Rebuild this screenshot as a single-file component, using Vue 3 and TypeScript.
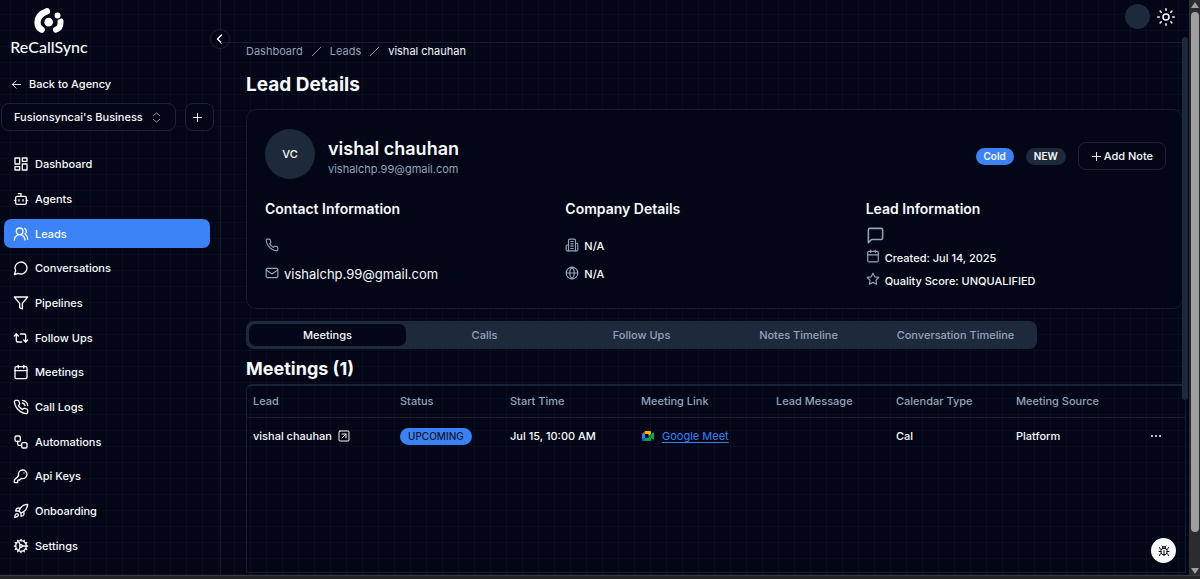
<script setup lang="ts">
import { ref } from 'vue'

interface NavItem { label: string; paths: string[] }

const icons: Record<string, string[]> = {
  calendar: ['M8 2v4', 'M16 2v4', 'M5 4h14a2 2 0 0 1 2 2v14a2 2 0 0 1-2 2H5a2 2 0 0 1-2-2V6a2 2 0 0 1 2-2z', 'M3 10h18'],
  phone: ['M22 16.92v3a2 2 0 0 1-2.18 2 19.79 19.79 0 0 1-8.63-3.07 19.5 19.5 0 0 1-6-6 19.79 19.79 0 0 1-3.07-8.67A2 2 0 0 1 4.11 2h3a2 2 0 0 1 2 1.72 12.84 12.84 0 0 0 .7 2.81 2 2 0 0 1-.45 2.11L8.09 9.91a16 16 0 0 0 6 6l1.27-1.27a2 2 0 0 1 2.11-.45 12.84 12.84 0 0 0 2.81.7A2 2 0 0 1 22 16.92z'],
  mail: ['M4 4h16a2 2 0 0 1 2 2v12a2 2 0 0 1-2 2H4a2 2 0 0 1-2-2V6a2 2 0 0 1 2-2z', 'm22 7-8.97 5.7a1.94 1.94 0 0 1-2.06 0L2 7'],
  building: ['M6 22V4a2 2 0 0 1 2-2h8a2 2 0 0 1 2 2v18Z', 'M6 12H4a2 2 0 0 0-2 2v6a2 2 0 0 0 2 2h2', 'M18 9h2a2 2 0 0 1 2 2v9a2 2 0 0 1-2 2h-2', 'M10 6h4', 'M10 10h4', 'M10 14h4', 'M10 18h4'],
  globe: ['M2 12a10 10 0 1 0 20 0a10 10 0 1 0-20 0', 'M12 2a14.5 14.5 0 0 0 0 20 14.5 14.5 0 0 0 0-20', 'M2 12h20'],
  message: ['M21 15a2 2 0 0 1-2 2H7l-4 4V5a2 2 0 0 1 2-2h14a2 2 0 0 1 2 2z'],
  star: ['M12 2l3.09 6.26L22 9.27l-5 4.87 1.18 6.88L12 17.77l-6.18 3.25L7 14.14 2 9.27l6.91-1.01z'],
}

const navItems: NavItem[] = [
  { label: 'Dashboard', paths: ['M3 3h7v9H3z', 'M14 3h7v5h-7z', 'M14 12h7v9h-7z', 'M3 16h7v5H3z'] },
  { label: 'Agents', paths: ['M12 8V4H8', 'M6 8h12a2 2 0 0 1 2 2v8a2 2 0 0 1-2 2H6a2 2 0 0 1-2-2v-8a2 2 0 0 1 2-2z', 'M2 14h2', 'M20 14h2', 'M15 13v2', 'M9 13v2'] },
  { label: 'Leads', paths: ['M18 21a8 8 0 0 0-16 0', 'M5 8a5 5 0 1 0 10 0a5 5 0 1 0-10 0', 'M22 20c0-3.37-2-6.5-4-8a5 5 0 0 0-.45-8.3'] },
  { label: 'Conversations', paths: ['M7.9 20A9 9 0 1 0 4 16.1L2 22Z'] },
  { label: 'Pipelines', paths: ['M22 3H2l8 9.46V19l4 2v-8.54z'] },
  { label: 'Follow Ups', paths: ['m2 9 3-3 3 3', 'M13 18H7a2 2 0 0 1-2-2V6', 'm22 15-3 3-3-3', 'M11 6h6a2 2 0 0 1 2 2v10'] },
  { label: 'Meetings', paths: icons.calendar },
  { label: 'Call Logs', paths: [...icons.phone, 'M14.05 2a9 9 0 0 1 8 7.94', 'M14.05 6A5 5 0 0 1 18 10'] },
  { label: 'Automations', paths: ['M5 3h4a2 2 0 0 1 2 2v4a2 2 0 0 1-2 2H5a2 2 0 0 1-2-2V5a2 2 0 0 1 2-2z', 'M7 11v4a2 2 0 0 0 2 2h4', 'M15 13h4a2 2 0 0 1 2 2v4a2 2 0 0 1-2 2h-4a2 2 0 0 1-2-2v-4a2 2 0 0 1 2-2z'] },
  { label: 'Api Keys', paths: ['M2 18v3c0 .6.4 1 1 1h4v-3l1-1h2l2.4-2.4a6.5 6.5 0 1 0-4-4Z', 'M16.5 7.5h.01'] },
  { label: 'Onboarding', paths: ['M4.5 16.5c-1.5 1.26-2 5-2 5s3.74-.5 5-2c.71-.84.7-2.13-.09-2.91a2.18 2.18 0 0 0-2.91-.09z', 'm12 15-3-3a22 22 0 0 1 2-3.95A12.88 12.88 0 0 1 22 2c0 2.72-.78 7.5-6 11a22.35 22.35 0 0 1-4 2z', 'M9 12H4s.55-3.03 2-4c1.62-1.08 5 0 5 0', 'M12 15v5s3.03-.55 4-2c1.08-1.62 0-5 0-5'] },
  { label: 'Settings', paths: ['M4 12a8 8 0 1 0 16 0a8 8 0 1 0-16 0', 'M10 12a2 2 0 1 0 4 0a2 2 0 1 0-4 0', 'M12 2v2', 'M12 22v-2', 'm17 20.66-1-1.73', 'M11 10.27 7 3.34', 'm20.66 17-1.73-1', 'm3.34 7 1.73 1', 'M14 12h8', 'M2 12h2', 'm20.66 7-1.73 1', 'm3.34 17 1.73-1', 'm17 3.34-1 1.73', 'm11 13.73-4 6.93'] },
]

const activeNav = ref('Leads')
const business = ref("Fusionsyncai's Business")
const tabs = ['Meetings', 'Calls', 'Follow Ups', 'Notes Timeline', 'Conversation Timeline']
const activeTab = ref('Meetings')

const sections = [
  { title: 'Contact Information', rows: [{ icon: 'phone', text: '', large: false }, { icon: 'mail', text: 'vishalchp.99@gmail.com', large: true }] },
  { title: 'Company Details', rows: [{ icon: 'building', text: 'N/A', large: false }, { icon: 'globe', text: 'N/A', large: false }] },
]
const leadRows = [
  { icon: 'calendar', text: 'Created: Jul 14, 2025' },
  { icon: 'star', text: 'Quality Score: UNQUALIFIED' },
]
const columns = ['Lead', 'Status', 'Start Time', 'Meeting Link', 'Lead Message', 'Calendar Type', 'Meeting Source']
</script>

<template>
  <div class="frame">
    <div class="app">
      <aside class="sidebar">
        <div class="brand">
          <svg class="brand-mark" viewBox="0 0 90 76" aria-hidden="true">
            <path d="M39 10C20 17 10 29 10 44c0 10 5 18 13 22" fill="none" stroke="#fff" stroke-width="19" stroke-linecap="round" />
            <path d="M80 40v5c0 11-6 19-14 21" fill="none" stroke="#fff" stroke-width="18" stroke-linecap="round" />
            <circle cx="44" cy="43" r="17" fill="#020617" />
            <circle cx="44" cy="43" r="13" fill="#fff" />
            <circle cx="71" cy="23" r="13" fill="#020617" />
            <circle cx="71" cy="23" r="9" fill="#fff" />
          </svg>
          <span class="brand-name">ReCallSync</span>
        </div>
        <button class="collapse" type="button" aria-label="Collapse sidebar">
          <svg class="icon bold" viewBox="0 0 24 24"><path d="m15 4-8 8 8 8" /></svg>
        </button>
        <a class="back" href="#agency">
          <svg class="icon" viewBox="0 0 24 24"><path d="m11 20-8-8 8-8" /><path d="M21 12H3" /></svg>
          Back to Agency
        </a>
        <div class="switcher">
          <div class="select-wrap">
            <select v-model="business" aria-label="Business">
              <option>Fusionsyncai's Business</option>
            </select>
            <svg class="icon select-icon" viewBox="0 0 24 24"><path d="m5 16 7 6 7-6" /><path d="m5 8 7-6 7 6" /></svg>
          </div>
          <button class="add" type="button" aria-label="Add business">
            <svg class="icon" viewBox="0 0 24 24"><path d="M3 12h18" /><path d="M12 3v18" /></svg>
          </button>
        </div>
        <nav class="nav" aria-label="Main">
          <div v-for="item in navItems" :key="item.label" class="nav-row">
            <a class="nav-link" :class="{ active: item.label === activeNav }" href="#" @click.prevent="activeNav = item.label">
              <svg class="icon" viewBox="0 0 24 24" aria-hidden="true"><path v-for="d in item.paths" :key="d" :d="d" /></svg>
              {{ item.label }}
            </a>
          </div>
        </nav>
      </aside>

      <div class="page">
        <header class="topbar">
          <span class="user"></span>
          <button class="theme" type="button" aria-label="Toggle theme">
            <svg class="icon" viewBox="0 0 24 24"><path d="M8 12a4 4 0 1 0 8 0a4 4 0 1 0-8 0M12 1v2M12 21v2M4.2 4.2l1.4 1.4M18.4 18.4l1.4 1.4M1 12h2M21 12h2M4.2 19.8l1.4-1.4M18.4 5.6l1.4-1.4" /></svg>
          </button>
        </header>
        <main class="content">
          <nav class="crumbs" aria-label="Breadcrumb">
            <a href="#dashboard">Dashboard</a>
            <svg class="slash" viewBox="0 0 12 12" aria-hidden="true"><path d="M1 11 11 1" /></svg>
            <a href="#leads">Leads</a>
            <svg class="slash" viewBox="0 0 12 12" aria-hidden="true"><path d="M1 11 11 1" /></svg>
            <span class="current">vishal chauhan</span>
          </nav>
          <h1>Lead Details</h1>

          <section class="card">
            <div class="profile">
              <div class="avatar">VC</div>
              <div class="identity">
                <h2>vishal chauhan</h2>
                <p>vishalchp.99@gmail.com</p>
              </div>
              <div class="actions">
                <span class="badge blue">Cold</span>
                <span class="badge">NEW</span>
                <button class="note" type="button">
                  <svg class="icon" viewBox="0 0 24 24"><path d="M3 12h18" /><path d="M12 3v18" /></svg>Add Note
                </button>
              </div>
            </div>
            <div class="facts">
              <section v-for="s in sections" :key="s.title">
                <h3>{{ s.title }}</h3>
                <ul class="fact-list">
                  <li v-for="r in s.rows" :key="r.icon" :class="{ large: r.large }">
                    <svg class="icon" viewBox="0 0 24 24" aria-hidden="true"><path v-for="d in icons[r.icon]" :key="d" :d="d" /></svg>
                    <span>{{ r.text }}</span>
                  </li>
                </ul>
              </section>
              <section>
                <h3>Lead Information</h3>
                <ul class="fact-list dense">
                  <li class="message">
                    <svg class="icon" viewBox="0 0 24 24" aria-hidden="true"><path v-for="d in icons.message" :key="d" :d="d" /></svg>
                  </li>
                  <li v-for="r in leadRows" :key="r.icon">
                    <svg class="icon" viewBox="0 0 24 24" aria-hidden="true"><path v-for="d in icons[r.icon]" :key="d" :d="d" /></svg>
                    <span>{{ r.text }}</span>
                  </li>
                </ul>
              </section>
            </div>
          </section>

          <div class="tabs" role="tablist">
            <button v-for="t in tabs" :key="t" type="button" role="tab" :aria-selected="t === activeTab" :class="{ active: t === activeTab }" @click="activeTab = t">{{ t }}</button>
          </div>
          <h2 class="table-title">Meetings (1)</h2>

          <div class="table-box">
            <table>
              <colgroup>
                <col class="w-lead" /><col class="w-status" /><col class="w-start" /><col class="w-link" /><col class="w-msg" /><col class="w-type" /><col class="w-source" /><col />
              </colgroup>
              <thead>
                <tr>
                  <th v-for="c in columns" :key="c" scope="col">{{ c }}</th>
                  <th aria-label="Actions"></th>
                </tr>
              </thead>
              <tbody>
                <tr>
                  <td>
                    <a class="lead-link" href="#lead">vishal chauhan
                      <svg class="icon" viewBox="0 0 24 24" aria-hidden="true"><path d="M4 2h16a2 2 0 0 1 2 2v16a2 2 0 0 1-2 2H4a2 2 0 0 1-2-2V4a2 2 0 0 1 2-2z" /><path d="M8 8h8v8" /><path d="m8 16 8-8" /></svg>
                    </a>
                  </td>
                  <td><span class="badge blue dark">UPCOMING</span></td>
                  <td>Jul 15, 10:00 AM</td>
                  <td>
                    <a class="meet" href="#meet">
                      <svg viewBox="0 0 24 20" aria-hidden="true">
                        <path d="M0 6h6v8H0z" fill="#2684fc" />
                        <path d="M6 0v6H0z" fill="#ea4335" />
                        <path d="M6 0h10q2 0 2 2v5l-5 3V6H6z" fill="#ffba00" />
                        <path d="M0 14h6v6H2q-2 0-2-2z" fill="#0066da" />
                        <path d="M6 14h7v-4l5 3v5q0 2-2 2H6z" fill="#00ac47" />
                        <path d="m15 10 7-7q2-1 2 1v12q0 2-2 1z" fill="#00ac47" />
                        <path d="m13 10 5-4v8z" fill="#00832d" />
                      </svg>
                      <span>Google Meet</span>
                    </a>
                  </td>
                  <td></td>
                  <td>Cal</td>
                  <td>Platform</td>
                  <td>
                    <button class="more" type="button" aria-label="Row actions">
                      <svg viewBox="0 0 12 12"><circle cx="2" cy="6" r="1" /><circle cx="6" cy="6" r="1" /><circle cx="10" cy="6" r="1" /></svg>
                    </button>
                  </td>
                </tr>
              </tbody>
            </table>
          </div>
        </main>
        <div class="inner-thumb" aria-hidden="true"></div>
        <button class="bug" type="button" aria-label="Report a bug">
          <svg class="icon" viewBox="0 0 24 24"><path d="m8 2 1.88 1.88M14.12 3.88 16 2M9 7.13v-1a3 3 0 1 1 6 0v1M12 20c-3.3 0-6-2.7-6-6v-3a4 4 0 0 1 4-4h4a4 4 0 0 1 4 4v3c0 3.3-2.7 6-6 6M12 20v-9M6.53 9C4.6 8.8 3 7.1 3 5M6 13H2M3 21c0-2.1 1.7-3.9 3.8-4M20.97 5c0 2.1-1.6 3.8-3.5 4M22 13h-4M17.2 17c2.1.1 3.8 1.9 3.8 4" /></svg>
        </button>
      </div>
    </div>

    <div class="scrollbar" aria-hidden="true">
      <svg viewBox="0 0 10 6"><path d="M5 0 9 6H1z" /></svg>
      <div class="thumb"></div>
      <svg viewBox="0 0 10 6"><path d="M5 6 9 0H1z" /></svg>
    </div>
    <div class="bottom-edge" aria-hidden="true"></div>
  </div>
</template>

<style>
body { background: #020617; }
</style>

<style scoped>
* { box-sizing: border-box; }
.frame {
  display: grid;
  grid-template-columns: minmax(0, 1fr) 11px;
  grid-template-rows: 1fr 4px;
  min-height: 100vh;
  font: 500 11px/16px Inter, "Liberation Sans", sans-serif;
  color: #f8fafc;
}
.app {
  display: grid;
  grid-template-columns: 221px minmax(0, 1fr);
  background-color: #020617;
  background-image:
    linear-gradient(to right, rgba(128, 140, 170, 0.05) 1px, transparent 1px),
    linear-gradient(to bottom, rgba(128, 140, 170, 0.05) 1px, transparent 1px);
  background-size: 16px 16px;
  background-position: 10px 14px;
}
button, select { font: inherit; color: inherit; margin: 0; cursor: pointer; }
a { color: inherit; text-decoration: none; }
h1, h2, h3, p, ul { margin: 0; padding: 0; }
.icon {
  width: 12px;
  height: 12px;
  flex: none;
  fill: none;
  stroke: currentColor;
  stroke-width: 2;
  stroke-linecap: round;
  stroke-linejoin: round;
}
.icon.bold { stroke-width: 3; }

.sidebar {
  position: relative;
  display: flex;
  flex-direction: column;
  border-right: 1px solid #141c2e;
  padding-bottom: 12px;
}
.brand {
  display: flex;
  flex-direction: column;
  align-items: center;
  width: 98px;
  padding-top: 8px;
}
.brand-mark { width: 30px; height: 25px; }
.brand-name { font: 500 16px/20px Lato, sans-serif; margin-top: 4px; }
.collapse {
  position: absolute;
  top: 29px;
  right: -10px;
  width: 20px;
  height: 20px;
  padding: 0;
  display: grid;
  place-items: center;
  border: 1px solid #1a2336;
  border-radius: 50%;
  background: #020617;
}
.back { display: flex; align-items: center; gap: 7px; margin-top: 19px; padding-left: 11px; }
.back .icon { width: 11px; height: 11px; }
.switcher { display: flex; gap: 9px; padding: 11px 6px 0 1px; }
.select-wrap { position: relative; flex: 1; }
.select-wrap select {
  width: 100%;
  height: 28px;
  padding: 0 28px 0 12px;
  appearance: none;
  border: 1px solid #1a2336;
  border-radius: 8px;
  background: #020617;
}
.select-icon { position: absolute; right: 14px; top: 9px; width: 11px; height: 11px; color: #94a3b8; pointer-events: none; }
.add {
  width: 29px;
  height: 28px;
  padding: 0 5px 0 0;
  display: grid;
  place-items: center;
  border: 1px solid #1a2336;
  border-radius: 8px;
  background: #020617;
}
.add .icon { width: 11px; height: 11px; }
.nav { flex: 1; display: flex; flex-direction: column; margin-top: 16px; padding: 0 10px 0 4px; }
.nav-row { flex: 1; display: flex; align-items: center; }
.nav-link {
  flex: 1;
  display: flex;
  align-items: center;
  gap: 6px;
  height: 29px;
  padding: 0 9px;
  border-radius: 7px;
}
.nav-link.active { background: #3b82f6; }
.nav-link .icon { width: 16px; height: 16px; }

.page { position: relative; display: flex; flex-direction: column; min-width: 0; }
.topbar {
  display: flex;
  justify-content: flex-end;
  align-items: flex-start;
  gap: 7px;
  height: 43px;
  margin-right: 6px;
  padding: 4px 8px 0 0;
  border-bottom: 1px solid #141c2e;
}
.user { width: 25px; height: 25px; border-radius: 50%; background: #1e293b; }
.theme { display: grid; place-items: center; width: 18px; height: 26px; padding: 0; border: 0; background: none; }
.theme .icon { width: 18px; height: 18px; }
.content { flex: 1; display: flex; flex-direction: column; padding: 0 3px 2px 25px; }
.crumbs { display: flex; align-items: center; gap: 8px; color: #94a3b8; font-weight: 400; }
.crumbs .current { color: #f8fafc; }
.slash { width: 11px; height: 11px; stroke: #94a3b8; fill: none; }
h1 { font-size: 19px; line-height: 24px; font-weight: 700; margin-top: 14px; }
.card {
  margin: 12px 3px 0 0;
  padding: 19px 16px 16px 18px;
  border: 1px solid #141c2e;
  border-radius: 10px;
  background: #020617;
}
.profile { display: flex; align-items: center; }
.avatar {
  display: grid;
  place-items: center;
  width: 50px;
  height: 50px;
  border-radius: 50%;
  background: #1e293b;
}
.identity { flex: 1; margin-left: 13px; padding-top: 8px; }
.identity h2 { font-size: 18px; line-height: 22px; font-weight: 600; }
.identity p { color: #94a3b8; font-weight: 400; line-height: 18px; }
.actions { display: flex; align-items: center; gap: 12px; padding-top: 4px; }
.badge {
  display: inline-block;
  padding: 0 8px;
  border-radius: 9px;
  background: #1e293b;
  font-size: 10px;
  line-height: 17px;
  font-weight: 600;
}
.badge.blue { background: #3b82f6; }
.badge.dark { color: #0f172a; font-weight: 500; }
.note {
  display: flex;
  align-items: center;
  gap: 2px;
  height: 28px;
  padding: 0 12px;
  border: 1px solid #1a2336;
  border-radius: 8px;
  background: #020617;
}
.note .icon { width: 11px; height: 11px; }
.facts { display: grid; grid-template-columns: repeat(3, 1fr); margin-top: 20px; }
h3 { font-size: 14px; line-height: 20px; font-weight: 600; }
.fact-list { list-style: none; margin-top: 13px; }
.fact-list li { display: flex; align-items: center; gap: 5px; height: 28px; }
.fact-list .icon { width: 14px; height: 14px; color: #94a3b8; margin-bottom: 3px; }
.fact-list .large { font-size: 13px; font-weight: 400; }
.fact-list.dense { margin-top: 6px; }
.fact-list.dense li { height: 23px; }
.fact-list.dense .message { height: 21px; }
.fact-list .message .icon { width: 19px; height: 19px; margin-bottom: 0; }

.tabs {
  display: grid;
  grid-template-columns: repeat(5, 1fr);
  width: 791px;
  max-width: 100%;
  margin-top: 12px;
  padding: 3px;
  border-radius: 8px;
  background: #1e293b;
}
.tabs button { height: 22px; padding: 0; border: 0; border-radius: 7px; background: none; color: #94a3b8; }
.tabs .active { background: #020617; color: #f8fafc; }
.table-title { font-size: 18px; line-height: 24px; font-weight: 700; margin-top: 8px; }
.table-box { flex: 1; margin-top: 3px; border: 1px solid #141c2e; border-top: 2px solid #1a2336; border-radius: 6px 0 0 0; }
table { width: 100%; table-layout: fixed; border-collapse: collapse; }
.w-lead { width: 147px; }
.w-status { width: 110px; }
.w-start { width: 131px; }
.w-link { width: 135px; }
.w-msg, .w-type { width: 120px; }
.w-source { width: 110px; }
th, td { padding: 0 6px; text-align: left; vertical-align: middle; white-space: nowrap; }
th { height: 31px; font-weight: 500; color: #94a3b8; }
thead tr { border-bottom: 1px solid #1a2336; }
td { height: 38px; }
.lead-link { display: flex; align-items: center; gap: 6px; }
.meet { display: flex; align-items: center; gap: 8px; color: #3b82f6; font-weight: 400; }
.meet svg { width: 12px; height: 10px; margin-left: 1px; }
.meet span { text-decoration: underline; text-underline-offset: 2px; }
.more { display: block; width: 28px; height: 28px; padding: 0; margin: 0 9px 0 auto; border: 0; background: none; }
.more svg { display: block; width: 12px; height: 12px; margin: auto; fill: #f8fafc; }

.inner-thumb { position: absolute; top: 37px; right: 1px; width: 6px; height: 363px; border-radius: 3px; background: #1e293b; }
.bug {
  position: absolute;
  right: 13px;
  bottom: 12px;
  width: 25px;
  height: 25px;
  padding: 0;
  display: grid;
  place-items: center;
  border: 0;
  border-radius: 50%;
  background: #f8fafc;
  color: #020617;
}
.scrollbar {
  display: flex;
  flex-direction: column;
  align-items: center;
  padding: 2px 0 1px;
  background: #2c2c2c;
}
.scrollbar svg { width: 10px; height: 6px; fill: #9f9f9f; }
.thumb { flex: 1; width: 8px; margin: 4px 0 36px; border-radius: 4px; background: #9f9f9f; }
.bottom-edge { grid-column: 1 / -1; background: #242426; border-top: 1px solid #3a3a3e; }
</style>
